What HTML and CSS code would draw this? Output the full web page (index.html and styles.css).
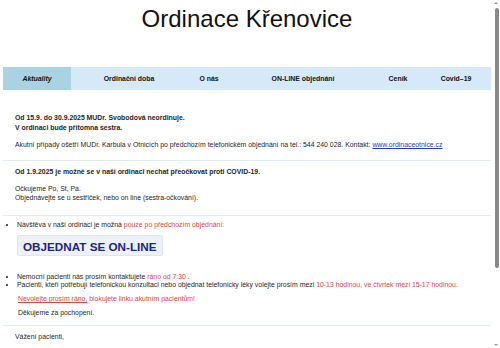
FILE: index.html
```html
<!DOCTYPE html>
<html lang="cs">
<head>
<meta charset="utf-8">
<title>Ordinace Křenovice</title>
<link rel="stylesheet" href="styles.css">
</head>
<body>
<div class="page">
  <header class="header">
    <h1 class="title">Ordinace Křenovice</h1>
  </header>
  <nav class="nav">
    <a class="nav-item active" href="#">Aktuality</a>
    <a class="nav-item" href="#">Ordinační doba</a>
    <a class="nav-item" href="#">O nás</a>
    <a class="nav-item" href="#">ON-LINE objednání</a>
    <a class="nav-item" href="#">Ceník</a>
    <a class="nav-item" href="#">Covid–19</a>
  </nav>

  <section class="block block-first">
    <p class="bold lh10">Od 15.9. do 30.9.2025 MUDr. Svobodová neordinuje.<br>V ordinaci bude přítomna sestra.</p>
    <p class="lh10 gap7">Akutní případy ošetří MUDr. Karbula v Otnicích po předchozím telefonickém objednání na tel.: 544 240 028. Kontakt: <a class="link" href="#">www.ordinaceotnice.cz</a></p>
  </section>

  <section class="block block-second">
    <p class="bold lh10">Od 1.9.2025 je možné se v naší ordinaci nechat přeočkovat proti COVID-19.</p>
    <p class="lh9 gap7">Očkujeme Po, St, Pá.<br>Objednávejte se u sestřiček, nebo on line (sestra-očkování).</p>
  </section>

  <section class="block block-third">
    <ul class="list">
      <li>Návštěva v naší ordinaci je možná <span class="red">pouze po předchozím objednání:</span></li>
    </ul>
    <a class="order-btn" href="#">OBJEDNAT SE ON-LINE</a>
    <ul class="list list-tight">
      <li>Nemocní pacienti nás prosím kontaktujete <span class="red">ráno od 7:30</span> .</li>
      <li>Pacienti, kteří potřebují telefonickou konzultaci nebo objednat telefonicky léky volejte prosím mezi <span class="red">10-13 hodinou, ve čtvrtek mezi 15-17 hodinou.</span></li>
    </ul>
    <p class="indent red gap5"><span class="underline">Nevolejte prosím ráno,</span> blokujete linku akutním pacientům!</p>
    <p class="indent gap4">Děkujeme za pochopení.</p>
  </section>

  <section class="block block-fourth">
    <p>Vážení pacienti,</p>
  </section>
</div>

<aside class="fake-scroll" aria-hidden="true">
  <span class="arrow-up"></span>
  <span class="thumb"></span>
  <span class="arrow-down"></span>
</aside>
</body>
</html>
```

FILE: styles.css
```css
html, body {
  margin: 0;
  padding: 0;
  overflow: hidden;
  background: #ffffff;
}

body {
  font-family: "Liberation Sans", Arial, sans-serif;
  color: #1e1e1e;
  font-size: 6.9px;
  line-height: 8px;
}

p {
  margin: 0;
}

.page {
  margin-left: 3px;
  width: 488px;
}

.header {
  height: 67px;
}

.title {
  margin: 0;
  padding-top: 5px;
  font-weight: normal;
  font-size: 24px;
  line-height: 28px;
  text-align: center;
  color: #111;
}

.nav {
  display: grid;
  grid-template-columns: 68px 116px 44px 144px 46px 70px;
  height: 23px;
  background: #d5e9f9;
}

.nav-item {
  display: flex;
  align-items: center;
  justify-content: center;
  font-weight: bold;
  font-size: 6.9px;
  color: #111;
  text-decoration: none;
}

.nav-item.active {
  background: #a9d2e3;
  font-style: italic;
}

.block {
  border-bottom: 1px solid #e4edf2;
  padding-left: 12px;
}

.block-first {
  padding-top: 23px;
  padding-bottom: 10px;
}

.block-second {
  padding-top: 6px;
  padding-bottom: 13px;
}

.block-third {
  padding-top: 4px;
  padding-left: 0;
  padding-bottom: 7px;
}

.block-fourth {
  border-bottom: none;
  padding-top: 6px;
  line-height: 10px;
}

.bold {
  font-weight: bold;
}

.lh10 {
  line-height: 10px;
}

.lh9 {
  line-height: 9px;
}

.gap7 {
  margin-top: 7px;
}

.gap5 {
  margin-top: 5px;
}

.gap4 {
  margin-top: 4px;
}

.link {
  color: #2b3bc9;
  text-decoration: underline;
}

.red {
  color: #e2463f;
}

.underline {
  text-decoration: underline;
}

.list {
  margin: 0;
  padding-left: 14px;
  line-height: 10px;
}

.list-tight {
  margin-top: 17px;
  line-height: 8px;
}

.order-btn {
  display: inline-block;
  margin-left: 14px;
  margin-top: 5px;
  padding: 0 5px;
  height: 21px;
  line-height: 21px;
  background: #edf2f8;
  border: 1px solid #dfe6ef;
  border-radius: 2px;
  box-sizing: border-box;
  font-size: 11.7px;
  font-weight: bold;
  color: #1b2580;
  text-decoration: none;
  vertical-align: top;
}

.indent {
  padding-left: 15px;
  line-height: 10px;
}

.fake-scroll {
  position: fixed;
  top: 0;
  right: 0;
  width: 8px;
  height: 348px;
  background: #ffffff;
}

.arrow-up,
.arrow-down {
  position: absolute;
  left: 2px;
  width: 0;
  height: 0;
  border-left: 2px solid transparent;
  border-right: 2px solid transparent;
}

.arrow-up {
  top: 2px;
  border-bottom: 2px solid #9a9a9a;
}

.arrow-down {
  bottom: 2px;
  border-top: 2px solid #9a9a9a;
}

.thumb {
  position: absolute;
  top: 8px;
  left: 3px;
  width: 4px;
  height: 260px;
  border-radius: 2px;
  background: #8a8a8a;
}
```
